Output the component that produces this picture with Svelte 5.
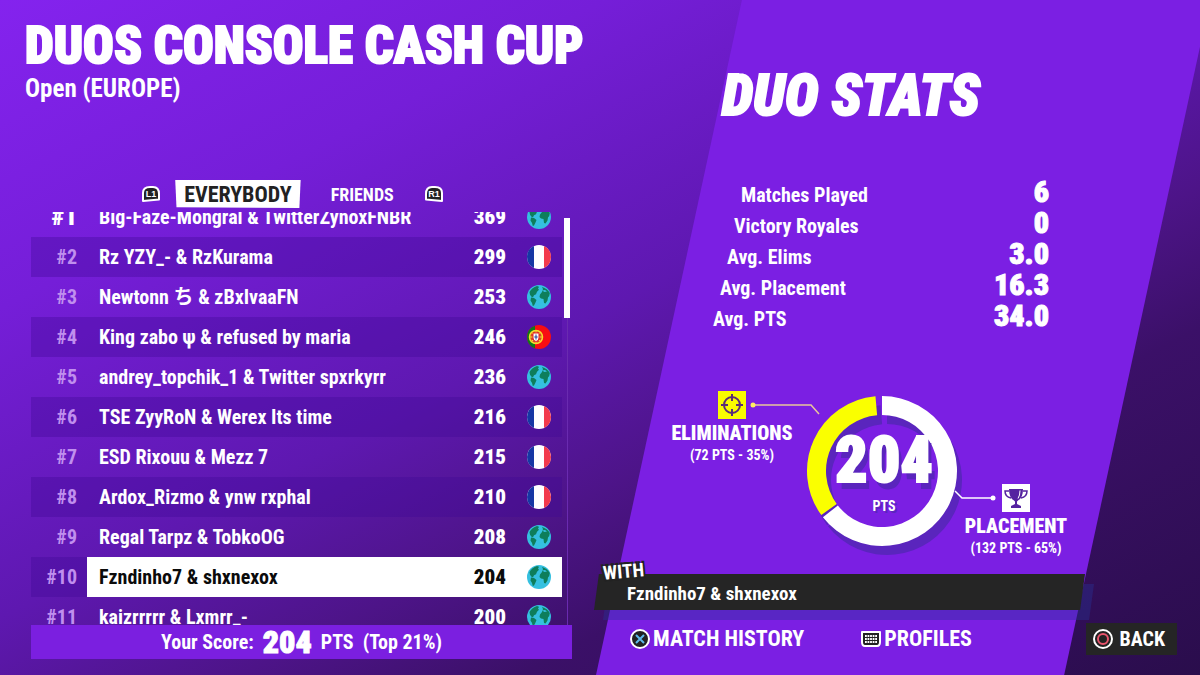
<script>
  const rows = [
    { rank: 1, name: 'Big-Faze-Mongral & TwitterZynoxFNBR', pts: 369, flag: 'globe' },
    { rank: 2, name: 'Rz YZY_- & RzKurama', pts: 299, flag: 'fr' },
    { rank: 3, name: 'Newtonn ち & zBxIvaaFN', pts: 253, flag: 'globe' },
    { rank: 4, name: 'King zabo ψ & refused by maria', pts: 246, flag: 'pt' },
    { rank: 5, name: 'andrey_topchik_1 & Twitter spxrkyrr', pts: 236, flag: 'globe' },
    { rank: 6, name: 'TSE ZyyRoN & Werex Its time', pts: 216, flag: 'fr' },
    { rank: 7, name: 'ESD Rixouu & Mezz 7', pts: 215, flag: 'fr' },
    { rank: 8, name: 'Ardox_Rizmo & ynw rxphal', pts: 210, flag: 'fr' },
    { rank: 9, name: 'Regal Tarpz & TobkoOG', pts: 208, flag: 'globe' },
    { rank: 10, name: 'Fzndinho7 & shxnexox', pts: 204, flag: 'globe' },
    { rank: 11, name: 'kaizrrrrr & Lxmrr_-', pts: 200, flag: 'globe' }
  ];
  const own = 10;
  const stats = [
    ['Matches Played', '6'],
    ['Victory Royales', '0'],
    ['Avg. Elims', '3.0'],
    ['Avg. Placement', '16.3'],
    ['Avg. PTS', '34.0']
  ];
  let tab = $state('everybody');

  // Ring geometry: angles run clockwise from twelve o'clock.
  function arc(from, to, outer = 75, inner = 56) {
    const at = (deg, r) => {
      const a = ((deg - 90) * Math.PI) / 180;
      return `${(75 + r * Math.cos(a)).toFixed(2)} ${(75 + r * Math.sin(a)).toFixed(2)}`;
    };
    const large = to - from > 180 ? 1 : 0;
    return `M${at(from, outer)}A${outer} ${outer} 0 ${large} 1 ${at(to, outer)}L${at(to, inner)}A${inner} ${inner} 0 ${large} 0 ${at(from, inner)}Z`;
  }
</script>

<main>
  <section class="board">
    <header>
      <h1>DUOS CONSOLE CASH CUP</h1>
      <p>Open (EUROPE)</p>
    </header>

    <nav class="tabs">
      <svg class="bumper" viewBox="0 0 20 18" aria-hidden="true">
        <path d="M2 16V8Q2 2 9 2h3q6 0 6 7v5.500Z" fill="#222" stroke="#fff" stroke-width="2" stroke-linejoin="round" />
        <text x="10" y="12">L1</text>
      </svg>
      <button class:active={tab === 'everybody'} onclick={() => (tab = 'everybody')}>EVERYBODY</button>
      <button class:active={tab === 'friends'} onclick={() => (tab = 'friends')}>FRIENDS</button>
      <svg class="bumper" viewBox="0 0 20 18" aria-hidden="true">
        <path d="M18 16V8Q18 2 11 2H8Q2 2 2 9v5.500Z" fill="#222" stroke="#fff" stroke-width="2" stroke-linejoin="round" />
        <text x="10" y="12">R1</text>
      </svg>
    </nav>

    <div class="list">
      <div class="window">
        <table>
          <tbody>
            {#each rows as row}
              <tr class:own={row.rank === own} class:first={row.rank === 1}>
                <th scope="row">#{row.rank}</th>
                <td class="name">{row.name}</td>
                <td class="pts">{row.pts}</td>
                <td class="flag">
                  <svg viewBox="0 0 24 24" aria-hidden="true">
                    {#if row.flag === 'fr'}
                      <circle cx="12" cy="12" r="12" fill="#fff" />
                      <path d="M7 1.100A12 12 0 0 0 7 22.900Z" fill="#1637a4" />
                      <path d="M17 1.100A12 12 0 0 1 17 22.900Z" fill="#f23a4c" />
                    {:else if row.flag === 'pt'}
                      <circle cx="12" cy="12" r="12" fill="#f80d12" />
                      <path d="M8 .700A12 12 0 0 0 8 23.300Z" fill="#0d7a1b" />
                      <circle cx="9" cy="12" r="6.500" fill="#d8422c" stroke="#f5e02b" stroke-width="1.500" />
                      <path d="M2.500 12h13M9 5.500v13M4.500 7.500l9 9M13.500 7.500l-9 9" stroke="#f5e02b" fill="none" />
                      <path d="M6 8h6v5q0 3-3 3.500-3-.500-3-3.500Z" fill="#fff" stroke="#e32222" />
                      <path d="M9 9.500v5M7.300 12h3.400" stroke="#1c3f9c" />
                    {:else}
                      <circle cx="12" cy="12" r="12" fill="#35c0e0" />
                      <path d="M2.500 7Q5 2.500 10 1l2 .800-1 2 1 1-2 2-1 2.500-2 1-1 2-1.500-.500-1.500-2Z" fill="#0e7e5b" />
                      <path d="M4 12.500l3 .500 2.500 2-1 2.500-1.500 3-1.200.500-.800-3-1.500-2.500Z" fill="#0e7e5b" />
                      <path d="M13 9.500l2-2.500 1-3-1-2Q20.500 3.500 22.800 8l-.600 3-1.200 1.500-.500 3-2 3-1.500-.500-.500-4-2.500-.500-1.500-1.500Z" fill="#0e7e5b" />
                      <path d="M15 5.500l3-.500 2 1.500-2.500.500Z" fill="#35c0e0" />
                    {/if}
                  </svg>
                </td>
              </tr>
            {/each}
          </tbody>
        </table>
      </div>
      <div class="scroll"><span></span></div>
    </div>

    <footer class="score">
      <span>Your Score:</span><strong>204</strong><span>PTS</span><span>(Top 21%)</span>
    </footer>
  </section>

  <section class="duo">
    <h2>DUO STATS</h2>

    <dl>
      {#each stats as [label, value], i}
        <div style:--step={stats.length - 1 - i}>
          <dt>{label}</dt>
          <dd>{value}</dd>
        </div>
      {/each}
    </dl>

    <div class="chart">
      <div class="share">
        <svg viewBox="0 0 28 28" aria-hidden="true">
          <path d="M0 0h28v28H0Z" fill="#f9fb00" />
          <g fill="none" stroke="#5a2a78" stroke-width="2">
            <circle cx="14" cy="14" r="8" />
            <path d="M14 3v7M14 18v7M3 14h7M18 14h7" />
          </g>
        </svg>
        <b>ELIMINATIONS</b>
        <small>(72 PTS - 35%)</small>
      </div>

      <div class="ring">
        <svg viewBox="0 0 150 150" aria-hidden="true">
          <g fill="#5a25bd" transform="translate(5 9)">
            <path d={arc(0, 232)} />
            <path d={arc(233, 355)} />
          </g>
          <path d={arc(0, 232)} fill="#fff" />
          <path d={arc(234, 355)} fill="#faff00" />
          <g fill="none" stroke-width="1.500">
            <path d="M-54 9H4l8 9" stroke="#e9c79a" />
            <path d="M148 95l7 7h31" stroke="#fff" />
          </g>
          <circle cx="-54" cy="9" r="2.500" fill="#ffee60" />
          <circle cx="186" cy="102" r="2.500" fill="#fff" />
        </svg>
        <div class="total"><strong>204</strong><span>PTS</span></div>
      </div>

      <div class="share low">
        <svg viewBox="0 0 28 28" aria-hidden="true">
          <path d="M0 0h28v28H0Z" fill="#fff" />
          <path d="M7 5h14q0 9-5 11.500l-1 1V20l4 2v2H9v-2l4-2v-2.500l-1-1Q7 14 7 5Z" fill="#5522a0" />
          <path d="M7 7H3q0 6 6 7M21 7h4q0 6-6 7" fill="none" stroke="#5522a0" stroke-width="1.500" />
          <path d="M18 6.500q0 5-2 8" fill="none" stroke="#fff" />
        </svg>
        <b>PLACEMENT</b>
        <small>(132 PTS - 65%)</small>
      </div>
    </div>

    <div class="with">
      <em>WITH</em>
      <p>Fzndinho7 &amp; shxnexox</p>
    </div>

    <div class="actions">
      <button>
        <svg viewBox="0 0 20 20" aria-hidden="true">
          <circle cx="10" cy="10" r="9" fill="#222" stroke="#fff" stroke-width="2" />
          <path d="M6 6l8 8M14 6l-8 8" stroke="#5fb8ea" stroke-width="2" />
        </svg>MATCH HISTORY
      </button>
      <button>
        <svg viewBox="0 0 20 20" aria-hidden="true">
          <path d="M1 3h18v10q0 4-3 4h-12q-3 0-3-4Z" fill="#222" stroke="#fff" stroke-width="2" stroke-linejoin="round" />
          <path d="M4 7h12M4 10h12M4 13h12" stroke="#fff" stroke-width="2" stroke-dasharray="1.800 .750" />
        </svg>PROFILES
      </button>
      <button class="back">
        <svg viewBox="0 0 20 20" aria-hidden="true">
          <circle cx="10" cy="10" r="9" fill="#222" stroke="#fff" stroke-width="2" />
          <circle cx="10" cy="10" r="5" fill="none" stroke="#e8546c" stroke-width="2" />
        </svg>BACK
      </button>
    </div>
  </section>
</main>

<style>
  :global(body) {
    margin: 0;
    background: #350f5c;
  }
  main {
    display: grid;
    grid-template-columns: minmax(0, 596fr) minmax(0, 604fr);
    min-height: 100vh;
    overflow: hidden;
    color: #fff;
    font: bold 20px/24px 'Roboto Condensed', Roboto, 'Noto Sans CJK JP', sans-serif;
    background: linear-gradient(153deg, #8423ee 0%, #751ed8 24%, #5e18b0 48%, #4d1488 62%, #3b1068 73%, #2a0d4c 100%);
  }
  h1, h2, p, dl, dd { margin: 0; }
  h1, h2, strong, dd, th, .pts {
    font-weight: 900;
    -webkit-text-stroke: 1px currentColor;
  }
  button {
    border: 0;
    padding: 0;
    background: none;
    color: inherit;
    font: inherit;
    white-space: nowrap;
    cursor: pointer;
  }
  svg { display: block; overflow: visible; }

  .board {
    display: flex;
    flex-direction: column;
    height: 100vh;
    box-sizing: border-box;
    padding: 20px 24px 16px 31px;
  }
  header {
    margin-left: -6px;
    height: 160px;
  }
  h1 {
    font-size: 51px;
    line-height: 52px;
    white-space: nowrap;
    -webkit-text-stroke-width: 2px;
  }
  header p {
    font-size: 25px;
    line-height: 34px;
  }
  .tabs {
    display: flex;
    align-items: center;
    justify-content: center;
    gap: 14px;
    height: 28px;
    padding-right: 18px;
    margin-bottom: 4px;
  }
  .tabs button {
    height: 28px;
    padding: 2px 16px 0;
    font-size: 18px;
    clip-path: polygon(0 0, 100% 0, 99% 100%, 1% 97%);
  }
  .tabs .active {
    padding: 2px 9px 0;
    background: #fff;
    color: #222;
    font-size: 22px;
  }
  .bumper { width: 20px; height: 18px; }
  .bumper text {
    fill: #fff;
    font: bold 9px 'Liberation Sans', sans-serif;
    text-anchor: middle;
  }

  .list {
    display: flex;
    flex: 1;
    min-height: 0;
    gap: 2px;
    padding-right: 2px;
  }
  .window {
    flex: 1;
    overflow: hidden;
  }
  table {
    width: 100%;
    margin-top: -15px;
    border-collapse: collapse;
  }
  tr { height: 40px; }
  tr:nth-child(even) { background: rgb(64 10 150 / 0.35); }
  th, td { padding: 0; }
  th {
    width: 46px;
    padding-right: 10px;
    text-align: right;
    color: #c08fee;
    font-size: 20px;
    font-weight: bold;
    -webkit-text-stroke-width: 0;
  }
  .first th {
    color: #fff;
    font-size: 25px;
    font-weight: 900;
  }
  .name { padding-left: 12px; text-align: left; }
  .pts {
    width: 50px;
    padding-right: 21px;
    text-align: right;
    font-size: 21px;
    -webkit-text-stroke-width: 0;
  }
  .flag { width: 35px; }
  .flag svg { width: 24px; height: 24px; }
  .own td { background: #fff; color: #0b0b0b; }
  .scroll {
    width: 6px;
    margin-top: 6px;
    background: linear-gradient(90deg, transparent 3px, #6a2bb0 3px, #6a2bb0 4px, transparent 4px);
  }
  .scroll span {
    display: block;
    height: 100px;
    background: #fff;
  }
  .score {
    display: flex;
    justify-content: center;
    align-items: center;
    gap: 9px;
    height: 34px;
    background: #7b1fe0;
  }
  .score strong { font-size: 32px; }

  .duo {
    position: relative;
    display: flex;
    flex-direction: column;
    box-sizing: border-box;
    padding: 70px 23px 20px 0;
  }
  .duo::before {
    content: '';
    position: absolute;
    inset: 0 -4px 0 0;
    background: #7b1fe3;
    clip-path: polygon(24% 0, 101% 0, 77% 100%, 0 100%);
  }
  .duo > * { position: relative; }
  h2 {
    margin-left: 126px;
    font-size: 57px;
    line-height: 52px;
    font-style: italic;
    -webkit-text-stroke-width: 2px;
  }
  dl {
    margin: 54px 128px 0 117px;
  }
  dl div {
    display: flex;
    justify-content: space-between;
    align-items: baseline;
    height: 31px;
    line-height: 31px;
    padding-left: calc(var(--step) * 7px);
  }
  dd { font-size: 30px; }
  .chart {
    display: flex;
    margin: 60px 0 0 77px;
  }
  .share {
    display: flex;
    flex-direction: column;
    align-items: center;
    width: 118px;
    white-space: nowrap;
  }
  .share svg { width: 28px; height: 28px; }
  .share b { line-height: 28px; }
  .share small { font-size: 14px; line-height: 16px; }
  .share.low { margin-top: 93px; }
  .ring {
    position: relative;
    width: 150px;
    height: 150px;
    margin: 5px 0 0 16px;
  }
  .total {
    position: absolute;
    inset: 0;
    display: flex;
    flex-direction: column;
    align-items: center;
    justify-content: center;
    padding: 4px 0 0 4px;
  }
  .total strong {
    font-size: 64px;
    line-height: 66px;
    text-shadow: 4px 7px 0 #5a25bd;
    -webkit-text-stroke-width: 2px;
  }
  .total span {
    font-size: 14px;
    text-shadow: 2px 2px 0 #5a25bd;
  }
  .with {
    margin-top: auto;
    padding: 8px 0 4px 31px;
    margin-right: 92px;
    color: #fff;
    font-size: 19px;
  }
  .with::before, .with::after {
    content: '';
    position: absolute;
    inset: 0 0 0 -2px;
    background: #252525;
    clip-path: polygon(1% 0, 100% 0, 99% 100%, 0 100%);
  }
  .with::before {
    background: rgb(40 50 150 / 0.4);
    transform: translate(9px, 10px);
  }
  .with p, .with em { position: relative; z-index: 1; }
  .with em {
    position: absolute;
    left: 7px;
    top: -14px;
    font-style: normal;
    transform: rotate(-5deg);
    text-shadow: -2px -2px #222, 2px -2px #222, -2px 2px #222, 2px 2px #222;
  }
  .actions {
    display: flex;
    align-items: center;
    margin-top: 13px;
    padding-left: 34px;
    font-size: 22px;
  }
  .actions button {
    display: flex;
    align-items: center;
    gap: 3px;
    margin-right: 57px;
  }
  .actions svg { width: 20px; height: 20px; }
  .actions .back {
    gap: 7px;
    height: 32px;
    margin: 0 0 0 auto;
    padding: 0 12px 0 7px;
    background: #252525;
    font-size: 20px;
  }
</style>
